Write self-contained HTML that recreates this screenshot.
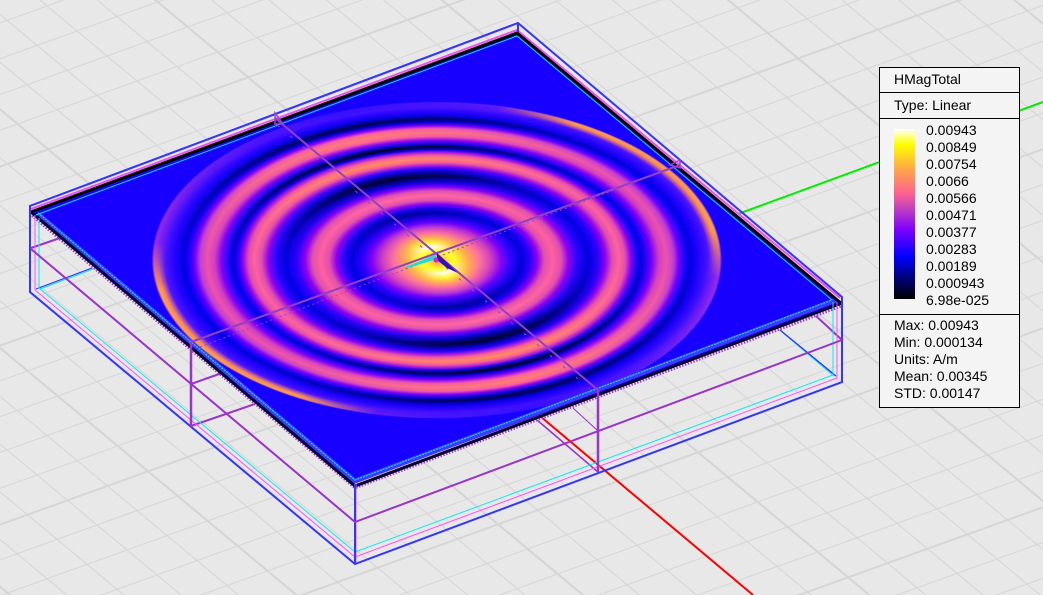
<!DOCTYPE html>
<html><head><meta charset="utf-8">
<style>
html,body{margin:0;padding:0;background:#e8e8e8;}
#w{position:relative;width:1043px;height:595px;overflow:hidden;background:#e8e8e8;font-family:"Liberation Sans",Arial,sans-serif;}
svg.l{position:absolute;left:0;top:0;}
.p{position:absolute;left:0;top:0;width:1000px;height:1000px;transform-origin:0 0;transform:matrix(.487,-.18,.324,.271,31,212);}
#a{background:radial-gradient(circle 484px at 496px 507px,#ff70a0 0,#ffc040 3%,#ffff20 5.5%,#fff 8.5%,#ffff40 11%,#ffc040 14%,#ff70a0 17.5%,#c040d0 21%,#6000ff 24%,#2000e0 27%,#0000a0 30%,#1000e0 33%,#8000f8 35.5%,#e050b0 38%,#ff68a0 41%,#e050b0 44%,#8000f8 46.5%,#1000e0 49%,#000080 51.5%,#000020 53.5%,#000090 55.5%,#2000ff 58%,#a020e0 60%,#ff6090 62%,#ff9060 64.3%,#ff6090 66.5%,#a020e0 68.5%,#1000e0 70%,#000080 71%,#000010 72%,#000080 73%,#1000e0 74%,#8000f8 76%,#ff60a0 78.5%,#ff8070 81%,#ff60a0 83.5%,#8000f8 85.5%,#0000d0 87.5%,#000040 89.5%,#0000d0 91.5%,#2000ff 94%,#4010ff 97%,#3010ff 100%,#1800ff 100.8%);}
#b{background:radial-gradient(circle 484px at 496px 507px,#ffa050 0,#ffe030 3%,#ffff30 6%,#ffe030 8%,#ffa850 11%,#ff70a0 15%,#d040c0 19%,#8000f8 23%,#3000ff 26%,#0000e0 30%,#3000ff 33%,#9000f0 35.5%,#e050b0 38%,#ff60a0 41%,#e050b0 44%,#9000f0 46.5%,#3000ff 49.5%,#0000e8 53.5%,#3000ff 57%,#9000f0 59.5%,#e050b0 62%,#ff60a0 64.3%,#e050b0 66.5%,#9000f0 68.5%,#3000ff 70%,#0000e8 72%,#3000ff 74%,#8000f8 76%,#d040c0 78.5%,#ee50b0 81%,#c040d0 83.5%,#7000ff 85.5%,#2000ff 87.5%,#0000e8 89.5%,#2000ff 92%,#4010ff 95%,#8020f0 98%,#a030e8 100%,#1800ff 100.8%);}
#a{-webkit-mask-image:conic-gradient(from 15deg at 496px 507px,rgba(0,0,0,1) 0deg,rgba(0,0,0,.75) 22deg,rgba(0,0,0,.3) 45deg,rgba(0,0,0,.05) 68deg,rgba(0,0,0,0) 90deg,rgba(0,0,0,.05) 112deg,rgba(0,0,0,.3) 135deg,rgba(0,0,0,.75) 158deg,rgba(0,0,0,1) 180deg,rgba(0,0,0,.75) 202deg,rgba(0,0,0,.3) 225deg,rgba(0,0,0,.05) 248deg,rgba(0,0,0,0) 270deg,rgba(0,0,0,.05) 292deg,rgba(0,0,0,.3) 315deg,rgba(0,0,0,.75) 338deg,rgba(0,0,0,1) 360deg);mask-image:conic-gradient(from 15deg at 496px 507px,rgba(0,0,0,1) 0deg,rgba(0,0,0,.75) 22deg,rgba(0,0,0,.3) 45deg,rgba(0,0,0,.05) 68deg,rgba(0,0,0,0) 90deg,rgba(0,0,0,.05) 112deg,rgba(0,0,0,.3) 135deg,rgba(0,0,0,.75) 158deg,rgba(0,0,0,1) 180deg,rgba(0,0,0,.75) 202deg,rgba(0,0,0,.3) 225deg,rgba(0,0,0,.05) 248deg,rgba(0,0,0,0) 270deg,rgba(0,0,0,.05) 292deg,rgba(0,0,0,.3) 315deg,rgba(0,0,0,.75) 338deg,rgba(0,0,0,1) 360deg);}
#c{background:radial-gradient(circle 484px at 496px 507px,rgba(255,150,80,0) 96%,rgba(255,150,80,.9) 98.4%,#ffa040 99.8%,rgba(255,160,64,0) 100.6%);
-webkit-mask-image:conic-gradient(from 88deg at 496px 507px,#000 0deg,#000 25deg,transparent 42deg,transparent 138deg,#000 155deg,#000 205deg,transparent 222deg,transparent 318deg,#000 335deg,#000 360deg);mask-image:conic-gradient(from 88deg at 496px 507px,#000 0deg,#000 25deg,transparent 42deg,transparent 138deg,#000 155deg,#000 205deg,transparent 222deg,transparent 318deg,#000 335deg,#000 360deg);}
#lg{position:absolute;left:879px;top:67px;width:139px;height:339px;background:#f4f4f4;border:1px solid #000;font-size:14px;line-height:17px;color:#000;}
#lg span{position:absolute;white-space:nowrap;}
#lg i{position:absolute;left:0;width:139px;height:1px;background:#000;}
#cb{position:absolute;left:14px;top:61px;width:21px;height:170px;background:linear-gradient(#fff 0,#ffff00 9%,#ffb040 22%,#ff6090 38%,#c040c0 47%,#8000ff 59%,#0000ff 75%,#000080 87%,#000 100%);}
</style></head><body>
<div id="w">
<svg class="l" width="1043" height="595" viewBox="0 0 1043 595">
<defs><pattern id="g" patternUnits="userSpaceOnUse" width="500" height="500" patternTransform="matrix(.4,-.144,.3,.25,896,380)">
<rect x="0" y="0" width="6" height="500" fill="#d6d6d6"/><rect x="100" y="0" width="3" height="500" fill="#d6d6d6"/><rect x="200" y="0" width="3" height="500" fill="#d6d6d6"/><rect x="300" y="0" width="3" height="500" fill="#d6d6d6"/><rect x="400" y="0" width="3" height="500" fill="#d6d6d6"/>
<rect x="0" y="0" width="500" height="6" fill="#d6d6d6"/><rect x="0" y="100" width="500" height="3" fill="#d6d6d6"/><rect x="0" y="200" width="500" height="3" fill="#d6d6d6"/><rect x="0" y="300" width="500" height="3" fill="#d6d6d6"/><rect x="0" y="400" width="500" height="3" fill="#d6d6d6"/>
</pattern></defs>
<rect width="1043" height="595" fill="url(#g)"/>
<g fill="none">
<line x1="738" y1="214" x2="1043" y2="102" stroke="#00ee00" stroke-width="2"/>
<line x1="540" y1="416" x2="753" y2="595" stroke="#ff0000" stroke-width="2"/>
<path d="M39 288L92 268M833 375L780 330" stroke="#00e8f0" stroke-width="1.2" transform="translate(1,1)"/>
<path d="M36 289L92 268M836 376L780 330" stroke="#3030ff" stroke-width="1.2"/>
<path d="M31 248L60 238M842 340L816 316" stroke="#9933cc" stroke-width="2"/>
<path d="M191 384L222 373M191 426L255 404" stroke="#9933cc" stroke-width="2"/>
<path d="M598 431L573 408" stroke="#9933cc" stroke-width="1"/>
<path d="M598 472L537 420" stroke="#9933cc" stroke-width="1.5"/>
</g>
</svg>
<div class="p" style="background:#1800ff"></div>
<div class="p" id="b"></div>
<div class="p" id="a"></div>
<div class="p" id="c"></div>
<svg class="l" width="1043" height="595" viewBox="0 0 1043 595">
<g fill="none">
<path d="M38 214L355 481L836 300" stroke="#4038ff" stroke-width="5"/>
<path d="M38 213L355 480L832 300" stroke="#00e8f0" stroke-width="1.2" stroke-dasharray="2 1"/>
<path d="M30 213.5L355 487.5L842 305.5" stroke="#9a40d8" stroke-width="3.5" stroke-dasharray="1.5 1.5"/>
<path d="M31 212L355 486L842 303" stroke="#0a0030" stroke-width="3"/>
<path d="M31 209L517 30L840 298" stroke="#f050f0" stroke-width="2"/>
<path d="M31 212L517 33L842 304" stroke="#000" stroke-width="3"/>
<path d="M36 215L517 36L832 300" stroke="#00e8f0" stroke-width="1"/>
<path d="M30 292V206L518 23L842 297V382L355 564L30 292Z" stroke="#3434ff" stroke-width="2"/>
<path d="M518 23V32" stroke="#3434ff" stroke-width="2"/>
<path d="M35 215V290L355 557L837 378V302" stroke="#ff50ff" stroke-width="1"/>
<path d="M39 218V288L355 552L833 375V302" stroke="#10e8f0" stroke-width="1"/>
<path d="M356 484V562" stroke="#ff50ff" stroke-width="1"/>
<path d="M355 484V564" stroke="#3434ff" stroke-width="2"/>
<path d="M31 249L355 522L842 340" stroke="#9933cc" stroke-width="2"/>
<path d="M191 342V427M598 390V472" stroke="#9933cc" stroke-width="2.5"/>
<path d="M275 118L598 390M191 342L680 165" stroke="#9040c8" stroke-width="2"/>
<path d="M277 125L590 389" stroke="#9040e0" stroke-width="1" stroke-dasharray="3 14"/>
<path d="M200 347L672 168" stroke="#9040e0" stroke-width="1" stroke-dasharray="2 3"/>
<path d="M275 113V124L283 124Z" stroke="#a040d0" stroke-width="1.5"/>
<path d="M680 160L670 165L680 168Z" stroke="#a040d0" stroke-width="1.5"/>
</g>
<polygon points="403,268 435,255 437,259 408,268" fill="#20d8e0"/>
<polygon points="437,253 458,273 447,268 437,260" fill="#3010b8"/>
<circle cx="436" cy="260" r="2.5" fill="#e020c0"/>
</svg>
<div id="lg">
<span style="left:14px;top:3px">HMagTotal</span><i style="top:24px"></i>
<span style="left:14px;top:29px">Type: Linear</span><i style="top:50px"></i>
<div id="cb"></div>
<span style="left:46px;top:54px">0.00943</span>
<span style="left:46px;top:71px">0.00849</span>
<span style="left:46px;top:88px">0.00754</span>
<span style="left:46px;top:105px">0.0066</span>
<span style="left:46px;top:122px">0.00566</span>
<span style="left:46px;top:139px">0.00471</span>
<span style="left:46px;top:156px">0.00377</span>
<span style="left:46px;top:173px">0.00283</span>
<span style="left:46px;top:190px">0.00189</span>
<span style="left:46px;top:207px">0.000943</span>
<span style="left:46px;top:224px">6.98e-025</span>
<i style="top:246px"></i>
<span style="left:14px;top:249px">Max: 0.00943</span>
<span style="left:14px;top:266px">Min: 0.000134</span>
<span style="left:14px;top:283px">Units: A/m</span>
<span style="left:14px;top:300px">Mean: 0.00345</span>
<span style="left:14px;top:317px">STD: 0.00147</span>
</div>
</div>
</body></html>
